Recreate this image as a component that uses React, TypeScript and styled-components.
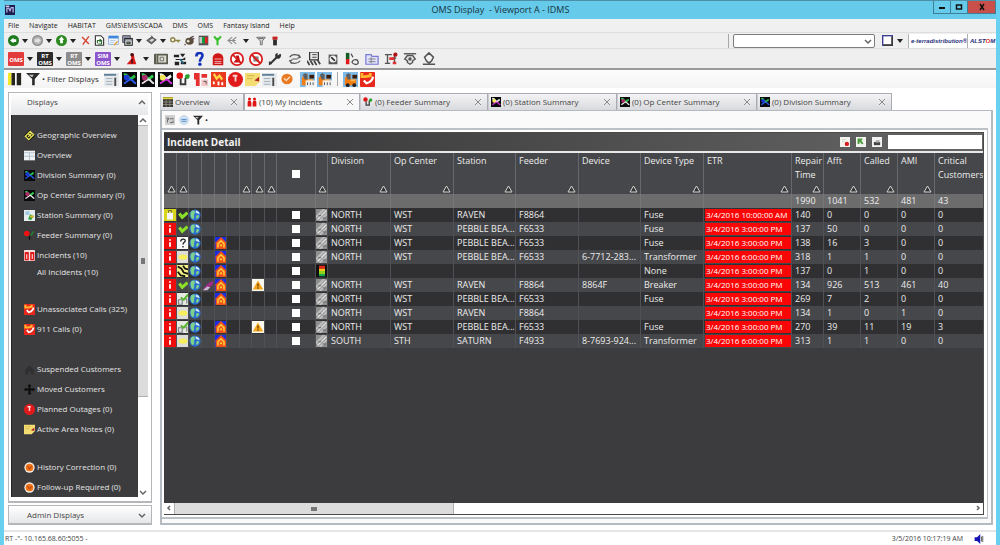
import React from "react";
import styled, { createGlobalStyle, css } from "styled-components";

const GlobalStyle = createGlobalStyle`
  * { box-sizing: border-box; }
  body {
    margin: 0;
    font-family: "Open Sans", "Noto Sans", sans-serif;
    font-size: 8px;
    line-height: 12px;
    color: #222;
  }
  button, input, select { font: inherit; color: inherit; margin: 0; padding: 0; border: 0; background: none; }
  svg { display: block; flex: none; }
`;

/* ---------- icons ---------- */

const OMS_BADGE = (fill: string, top: string) => (
  <>
    <rect x="0" y="1" width="16" height="14" rx="1" fill={fill} />
    {top && (
      <text x="8" y="7" fontSize="6" fontWeight="700" fill="#fff" textAnchor="middle">{top}</text>
    )}
    <text x="8" y={top ? 14 : 11} fontSize={6} fontWeight="700" fill="#fff" textAnchor="middle">OMS</text>
  </>
);

const TRUCK = (
  <>
    <rect width="16" height="16" fill="#7fb9e6" />
    <path d="M2 14V6l4-4h2v6h6v6z" fill="#f07c12" />
    <path d="M3 3l3-2 2 2v5H5z" fill="#56606a" />
    <path d="M10 3h5v4h-5z" fill="#3c1c08" />
    <path d="M8 8h5v2H8z" fill="#ffb347" />
  </>
);

const NETWORK = (a: string, b: string, c: string) => (
  <>
    <rect width="16" height="16" fill="#0a0a0c" />
    <path d="M2 3c4-1 4 3 6 4s4-2 6-3" stroke={a} strokeWidth="3" fill="none" />
    <path d="M2 12c3 0 4-4 7-4s3 4 6 4" stroke={b} strokeWidth="2" fill="none" />
    <circle cx="5" cy="6" r="3" fill={c} />
  </>
);

const ICONS: Record<string, React.ReactNode> = {
  app: (
    <>
      <rect width="16" height="16" fill="#1d1c4e" />
      <path d="M3 12V5h3l2 4 2-5h3v8" stroke="#b9b7e8" strokeWidth="2" fill="none" />
      <path d="M1 1h6v2H1z" fill="#e8e8f4" />
    </>
  ),
  back: (
    <>
      <circle cx="8" cy="8" r="8" fill="#1d7a1d" />
      <path d="M3 8l5-4v2h4v4H8v2z" fill="#fff" />
    </>
  ),
  forward: (
    <>
      <circle cx="8" cy="8" r="8" fill="#8d8d8d" />
      <circle cx="8" cy="8" r="6" fill="#b4b4b4" />
      <path d="M13 8L8 4v2H4v4h4v2z" fill="#e2e2e2" />
    </>
  ),
  up: (
    <>
      <circle cx="8" cy="8" r="8" fill="#2c8a20" />
      <path d="M8 2L4 7h2v5h4V7h2z" fill="#fff" />
    </>
  ),
  stop: <path d="M3 3l10 10M13 2L4 14" stroke="#d8412f" strokeWidth="2" fill="none" />,
  refresh: (
    <>
      <path d="M2 1h8l4 4v10H2z" fill="#fff" stroke="#333" strokeWidth="1.6" />
      <path d="M5 12V8h5M8 6l3 2-3 2M11 9v4H6" stroke="#2a6e2a" strokeWidth="1.6" fill="none" />
    </>
  ),
  calendar: (
    <>
      <rect x="1" y="2" width="14" height="12" fill="#eef4fc" stroke="#7ba2d8" />
      <rect x="1" y="1" width="14" height="4" fill="#3f86dd" />
      <path d="M3 8h8M3 11h6" stroke="#9db8da" />
      <path d="M9 15l5-6" stroke="#e2a53c" strokeWidth="2" />
    </>
  ),
  windows: (
    <>
      <rect x="1" y="1" width="11" height="10" fill="#8a90a8" stroke="#333" />
      <rect x="4" y="5" width="11" height="10" fill="#d8d8e4" stroke="#222" strokeWidth="1.4" />
      <path d="M4 7h11M7 10h5v3H7z" stroke="#333" fill="#5d7f52" />
    </>
  ),
  printer: (
    <>
      <path d="M1 8l7-5 7 4-7 6z" fill="#6d6d6d" stroke="#333" />
      <path d="M5 8l4-3 3 2-4 3z" fill="#ddd" />
      <path d="M7 1l3 2-2 2" stroke="#333" fill="none" />
    </>
  ),
  key: (
    <>
      <circle cx="4" cy="7" r="3" fill="none" stroke="#8d8340" strokeWidth="2" />
      <path d="M7 8h8M12 8v3" stroke="#8d8340" strokeWidth="2" />
    </>
  ),
  beetle: (
    <>
      <ellipse cx="8" cy="9" rx="6" ry="5" fill="#5b4d3c" />
      <circle cx="6" cy="9" r="2" fill="#e2dccf" />
      <path d="M9 4l5-2M12 6l3-1M2 13l-1 2" stroke="#433" strokeWidth="1.6" />
    </>
  ),
  levels: (
    <>
      <rect x="1" y="1" width="14" height="14" fill="#555" />
      <rect x="2" y="3" width="4" height="9" fill="#c8c8c8" />
      <rect x="6" y="3" width="4" height="9" fill="#0aa03a" />
      <rect x="10" y="3" width="4" height="9" fill="#e02020" />
    </>
  ),
  branch: <path d="M3 2l5 6 5-6M8 8v7M8 4v3" stroke="#35c02c" strokeWidth="3" fill="none" />,
  chevrons: <path d="M9 3L3 8l6 5M15 3L9 8l6 5M4 8h10" stroke="#8a8a8a" strokeWidth="1.6" fill="none" />,
  filterOutline: <path d="M1 2h14l-5 6v6H7V8zM4 4h8" fill="#d6d6d6" stroke="#666" strokeWidth="1.4" />,
  signal: (
    <>
      <rect x="4" y="1" width="8" height="5" fill="#c62222" />
      <rect x="5" y="6" width="6" height="9" fill="#2b2b2b" />
    </>
  ),
  frame: (
    <>
      <rect x="1" y="1" width="14" height="14" fill="#fff" stroke="#3f3f96" strokeWidth="2" />
      <path d="M15 2v13H2" stroke="#3b3b3b" strokeWidth="3" fill="none" />
    </>
  ),
  oms: OMS_BADGE("#e23b3b", ""),
  rt: OMS_BADGE("#2b2b2b", "RT"),
  stby: OMS_BADGE("#8c8c8c", "RT"),
  sim: OMS_BADGE("#8d55cc", "SIM"),
  alarm: (
    <>
      <path d="M2 14L7 8V2h3l1 6 2 6z" fill="#d81c1c" />
      <circle cx="8" cy="3" r="2" fill="#4b1111" />
      <path d="M8 8v5" stroke="#511" strokeWidth="2" />
    </>
  ),
  camera: (
    <>
      <rect x="0" y="2" width="16" height="12" rx="1" fill="#5b5b50" />
      <path d="M3 3v10" stroke="#a8a89c" />
      <rect x="5" y="4" width="9" height="8" fill="#dcdcd0" />
      <path d="M7 6h4v4H7z" fill="none" stroke="#666" />
    </>
  ),
  device: (
    <>
      <path d="M1 3h6v3H1zM8 2h6l-3 4M3 8h8l3-2v3H3zM2 11h5v4H2zM9 11h6v3H9z" fill="#222" />
      <path d="M8 8l4 5" stroke="#2d6a8c" strokeWidth="2" />
    </>
  ),
  help: (
    <>
      <path d="M5 5c0-5 7-5 7-1 0 3-3 3-3 7" stroke="#1533b8" strokeWidth="3" fill="none" />
      <circle cx="9" cy="14" r="2" fill="#1533b8" />
    </>
  ),
  bag: (
    <>
      <path d="M2 15V6c1-6 11-6 12 0v9z" fill="#cf1717" />
      <path d="M4 8h8M4 11h8M4 13h8" stroke="#f7c6c6" />
    </>
  ),
  noAlarm: (
    <>
      <circle cx="8" cy="8" r="7" fill="#fff" stroke="#d81c1c" strokeWidth="2" />
      <path d="M4 12l3-4V4h3l2 8z" fill="#c01212" />
      <path d="M3 3l10 10" stroke="#d81c1c" strokeWidth="2" />
    </>
  ),
  noEntry: (
    <>
      <circle cx="8" cy="8" r="7" fill="#fff" stroke="#d81c1c" strokeWidth="2" />
      <path d="M5 5h6v6H5z" fill="#888" />
      <path d="M3 3l10 10" stroke="#d81c1c" strokeWidth="2.4" />
    </>
  ),
  wrench: (
    <>
      <path d="M3 13l7-7" stroke="#333" strokeWidth="2.4" />
      <path d="M14 2l-3 2v-3c-3 0-4 4-1 6s5-1 5-4zM1 11c2-1 4 1 3 3l-3 1z" fill="#333" />
    </>
  ),
  swap: <path d="M2 6c2-4 9-4 12 0M14 10c-3 4-10 4-12 0M5 8h6M12 3l2 3-3 1M4 13l-2-3 3-1" stroke="#555" strokeWidth="1.4" fill="none" />,
  crew: (
    <>
      <rect x="3" y="0" width="10" height="9" fill="#e8e8e8" stroke="#333" strokeWidth="1.4" />
      <path d="M6 3h5M6 6h5" stroke="#333" />
      <path d="M0 10l3 5M4 10l3 5M8 10l3 5M12 9l3 5" stroke="#444" strokeWidth="2" />
    </>
  ),
  tag: (
    <>
      <rect x="3" y="3" width="10" height="11" fill="#555" />
      <circle cx="8" cy="8" r="4" fill="#eee" />
      <path d="M6 6l4 4" stroke="#222" strokeWidth="2" />
    </>
  ),
  semaphore: (
    <>
      <rect x="1" y="1" width="4" height="7" fill="#135c22" />
      <rect x="1" y="8" width="4" height="6" fill="#e01919" />
      <path d="M7 2l2 4M8 12c0-3 6-5 7-1s-5 4-7 1" stroke="#444" strokeWidth="1.4" fill="none" />
    </>
  ),
  folder: (
    <>
      <path d="M1 3h6l1 2h7v9H1z" fill="#dfe0fa" stroke="#7a7ad0" strokeWidth="1.4" />
      <path d="M4 8h8M4 11h8M7 6v7" stroke="#777" />
    </>
  ),
  circuit: (
    <>
      <path d="M1 3h8M1 13h6M4 3v10M9 7h5M12 3v9" stroke="#555" strokeWidth="1.6" />
      <path d="M6 6h6v3H6zM10 11h4v3h-4z" fill="#e23131" />
      <circle cx="13" cy="3" r="2.4" fill="#b01010" />
    </>
  ),
  bellDown: (
    <>
      <path d="M1 2h14" stroke="#555" strokeWidth="1.6" />
      <path d="M5 4h6l3 4-3 2v2l-3 2-3-2v-2L2 8z" stroke="#555" strokeWidth="1.6" fill="#e2e2e2" />
      <circle cx="8" cy="8" r="2" fill="#555" />
    </>
  ),
  bellUp: (
    <>
      <path d="M8 1L3 6l2 4 2 2h2l2-2 2-4z" stroke="#555" strokeWidth="1.8" fill="#f2f2f2" />
      <path d="M8 11v3M1 14h14" stroke="#555" strokeWidth="1.6" />
    </>
  ),
  columns: (
    <>
      <path d="M0 1h4v14H0z" fill="#f2e82a" />
      <path d="M4 1h4v14H4zM10 1h5v14h-5z" fill="#26261e" />
    </>
  ),
  filter: (
    <>
      <path d="M0 1h16L10 8v7H7V8z" fill="#2c2c2c" />
      <path d="M3 3h6L7 6z" fill="#c9c9c9" />
    </>
  ),
  sheet: (
    <>
      <rect x="0" y="1" width="16" height="14" fill="#e7ebee" />
      <path d="M0 3h13" stroke="#5e7f96" strokeWidth="2" />
      <path d="M2 7h7M2 10h7M2 13h7" stroke="#9fabb3" />
      <path d="M12 6v9" stroke="#4a4a4a" strokeWidth="2" />
    </>
  ),
  netBlue: NETWORK("#28c048", "#2a5bf0", "#1b38d0"),
  netGreen: NETWORK("#35d052", "#e8e8e8", "#ad2a68"),
  netMagenta: NETWORK("#f0f0f0", "#d22be0", "#f4e75a"),
  feeder: (
    <>
      <circle cx="4" cy="4" r="3.5" fill="#e01414" />
      <path d="M5 7v6h5V7l4-4" stroke="#3a3a3a" strokeWidth="2" fill="none" />
      <circle cx="12" cy="5" r="2.5" fill="#28a52f" />
    </>
  ),
  feederNav: (
    <>
      <circle cx="4" cy="5" r="4" fill="#f01010" />
      <path d="M10 8l4-6" stroke="#1d8a2a" strokeWidth="2" />
      <path d="M8 9v5" stroke="#0c0c0c" strokeWidth="2" />
    </>
  ),
  incidents: (
    <>
      <rect width="16" height="16" rx="1" fill="#f6dede" />
      <rect x="1" y="3" width="6" height="12" fill="#e01414" />
      <rect x="9" y="3" width="6" height="12" fill="#e01414" />
      <path d="M4 6v7M12 6v7" stroke="#fff" strokeWidth="1.4" />
    </>
  ),
  incidentsTab: (
    <>
      <path d="M2 6h4l1 3v6H1V8zM10 6h4l1 2v7H9V9z" fill="#e01414" />
      <circle cx="4" cy="3" r="2.4" fill="#e01414" />
      <circle cx="12" cy="3" r="2.4" fill="#e01414" />
    </>
  ),
  incidentsBar: (
    <>
      <path d="M0 1h6v7H0zM2 8h4v7H2zM8 2h6v4H8z" fill="#e63030" />
      <path d="M8 8h7v7H8z" fill="#f3c5c5" />
      <path d="M10 10h3v3" stroke="#555" fill="none" />
    </>
  ),
  callsBar: (
    <>
      <rect width="16" height="16" fill="#e83a20" />
      <path d="M3 2l3 5 3-3 3 4" stroke="#ffd84a" strokeWidth="2.4" fill="none" />
      <path d="M3 13v-3M8 14v-4M12 14v-3" stroke="#fff" strokeWidth="2" />
    </>
  ),
  calls: (
    <>
      <rect width="16" height="16" rx="1" fill="#e8281c" />
      <path d="M2 1v4h4l5-1V1" stroke="#ffb52e" strokeWidth="3" fill="none" />
      <path d="M4 9l3 3c4-1 6-3 7-7" stroke="#fff" strokeWidth="2.4" fill="none" />
    </>
  ),
  outage: (
    <>
      <circle cx="8" cy="8" r="8" fill="#e01a1a" />
      <path d="M5 4h5M8 4v6" stroke="#fbd0d0" strokeWidth="2" />
    </>
  ),
  note: (
    <>
      <path d="M0 1h16v9l-5 5H0z" fill="#f4dd72" />
      <path d="M2 4h8M2 7h6" stroke="#cfb34c" />
      <path d="M10 9l5-4v5z" fill="#b3242a" />
    </>
  ),
  orangeHeart: (
    <>
      <circle cx="8" cy="8" r="7.5" fill="#f5ede6" />
      <circle cx="8" cy="8" r="5.6" fill="#f0761c" />
      <path d="M5 6l3 4 3-4" stroke="#c54c10" strokeWidth="2" fill="none" />
    </>
  ),
  orangeBar: (
    <>
      <ellipse cx="8" cy="8" rx="7.5" ry="7" fill="#ea7a22" />
      <path d="M4 7l3 3 5-5" stroke="#fbd9b8" strokeWidth="2" fill="none" />
    </>
  ),
  truck: (
    <>
      {TRUCK}
      <circle cx="5" cy="14" r="2" fill="#222" />
      <circle cx="12" cy="14" r="2" fill="#222" />
    </>
  ),
  truckNote: (
    <>
      {TRUCK}
      <path d="M6 9h10v7H6z" fill="#f2f2f2" />
      <path d="M8 14v-3M11 14v-3M14 11v3" stroke="#555" />
    </>
  ),
  geo: (
    <>
      <path d="M8 0l8 8-8 8-8-8z" fill="#101008" />
      <path d="M9 2l5 5-7 7-5-5zM6 5l5 5M11 5l-5 5" stroke="#e8e25a" strokeWidth="2" fill="none" />
    </>
  ),
  overview: (
    <>
      <rect x="0" y="1" width="16" height="14" fill="#eef2f5" />
      <path d="M0 4h16M8 4v11M0 9h16" stroke="#a9b9c6" strokeWidth="1.2" />
    </>
  ),
  station: (
    <>
      <rect width="16" height="16" fill="#e4ecee" />
      <path d="M2 2h6v5H2z" fill="#9fc8e2" />
      <path d="M6 13l3-7 5 3-4 6z" fill="#2ea33a" />
      <path d="M9 8h5v3H9z" fill="#e8b428" />
    </>
  ),
  suspended: <path d="M2 15V8l6-6 6 6v7h-4v-4H6v4z" fill="#2f2f30" />,
  moved: <path d="M8 0l3 3H9.500v3.500H13V5l3 3-3 3V9.500H9.500V13H11l-3 3-3-3h1.500V9.500H3V11L0 8l3-3v1.500h3.500V3H5z" fill="#0c0c0c" />,
  grid: (
    <>
      <rect width="16" height="16" fill="#3a3a34" />
      <path d="M0 2h16" stroke="#e5d83a" strokeWidth="3" />
      <path d="M0 8h16M0 12h16M5 4v12M11 4v12" stroke="#a7a79c" />
    </>
  ),
  fit: (
    <>
      <rect width="16" height="16" fill="#cfcfcf" />
      <path d="M2 5h4v2H4v5M8 6h6M8 12h5V9" stroke="#6d6d6d" strokeWidth="1.6" fill="none" />
    </>
  ),
  sync: (
    <>
      <circle cx="8" cy="8" r="7" fill="#d5e4f4" stroke="#9fbfe0" />
      <path d="M4 7h8M4 10h8" stroke="#4a84c4" strokeWidth="1.6" />
    </>
  ),
  exportRed: (
    <>
      <rect width="16" height="16" fill="#f1f1ee" />
      <path d="M3 4h7M3 7h5" stroke="#bcd0bc" />
      <circle cx="11" cy="11" r="3.5" fill="#d81c1c" />
    </>
  ),
  exportGreen: (
    <>
      <rect width="16" height="16" fill="#f1f4ee" />
      <path d="M4 4l7 7M4 11V4h6" stroke="#4b9a3c" strokeWidth="3" fill="none" />
    </>
  ),
  print: (
    <>
      <rect width="16" height="16" fill="#f1f1f1" />
      <path d="M3 8h10v5H3z" fill="#444" />
      <path d="M6 5h6v4H6z" fill="#aaa" />
    </>
  ),
  lock: (
    <>
      <rect width="16" height="16" fill="#d9d41c" />
      <rect x="4" y="5" width="8" height="9" fill="#f4f4ff" />
      <path d="M6 5V2h4v3" stroke="#555" fill="none" />
    </>
  ),
  info: (
    <>
      <rect width="16" height="16" fill="#ee0c0c" />
      <path d="M8 7v6M8 3v2" stroke="#fff" strokeWidth="2.4" />
    </>
  ),
  check: <path d="M3 6l4 5 7-6" stroke="#8be02a" strokeWidth="4" fill="none" />,
  question: (
    <>
      <rect width="16" height="16" fill="#fafafa" />
      <path d="M5 6c0-4 6-4 6-1 0 2-3 2-3 5M8 12v2" stroke="#222" strokeWidth="1.8" fill="none" />
    </>
  ),
  oval: (
    <>
      <rect width="16" height="16" fill="#dcdcd8" />
      <ellipse cx="8" cy="8" rx="6" ry="3.5" fill="#f6ee5a" />
    </>
  ),
  tiger: (
    <>
      <rect width="16" height="16" fill="#f4f08c" />
      <path d="M1 2l5 3 3 5 7 2M1 9l4 5 6 1M8 1l3 4 5 1" stroke="#141408" strokeWidth="2.4" fill="none" />
    </>
  ),
  dispatch: (
    <>
      <rect width="16" height="16" fill="#e6e8e2" />
      <path d="M2 9h5v6H2zM9 8h4v6" stroke="#7c8288" strokeWidth="1.6" fill="none" />
      <path d="M5 6l4 3 6-7" stroke="#58b82a" strokeWidth="2.6" fill="none" />
    </>
  ),
  globe: (
    <>
      <circle cx="8" cy="8" r="7.5" fill="#2b6fd0" />
      <path d="M5 2c4-1 3 3 2 5s1 4-1 6-4-3-4-6 1-4 3-5zM11 8c4-1 2 4 0 5s-2-4 0-5z" fill="#7fd08a" />
      <path d="M9 2c3 0 5 3 5 5l-5-2z" fill="#d6ecf8" />
    </>
  ),
  plane: (
    <>
      <path d="M1 14L8 6l7-4-1 7-6 2z" fill="#a02c8a" />
      <path d="M1 15l6-5 4 1-4 4z" fill="#c9bcd0" />
    </>
  ),
  house: (
    <>
      <rect width="16" height="16" fill="#1c2ce0" />
      <path d="M8 0l8 8-1 1v7H1V9L0 8z" fill="#f0521a" />
      <path d="M4 14V9l4-4 4 4v5" stroke="#ffd23a" strokeWidth="2" fill="none" />
      <circle cx="8" cy="11" r="1.5" fill="#ffd23a" />
    </>
  ),
  warning: (
    <>
      <rect width="16" height="16" fill="#fbf8ee" />
      <path d="M8 2l7 12H1z" fill="#f2a81d" />
      <path d="M8 6v4M8 11v2" stroke="#7a3c00" strokeWidth="1.8" />
    </>
  ),
  hatch: (
    <>
      <rect width="16" height="16" fill="#8f8f8f" />
      <path d="M0 11L11 0M5 16L16 5" stroke="#bdbdbd" strokeWidth="3" />
      <path d="M2 14L14 2" stroke="#e4e4e4" strokeWidth="2" />
      <path d="M3 9h4M9 12h4" stroke="#666" strokeWidth="1.6" />
    </>
  ),
  heat: (
    <>
      <rect width="16" height="16" fill="#111" />
      <path d="M4 1h8v4H4z" fill="#e8281c" />
      <path d="M4 5h8v3H4z" fill="#f6c21c" />
      <path d="M4 8h8v4H4z" fill="#8ed21c" />
      <path d="M4 12h8v3H4z" fill="#1ca84a" />
    </>
  ),
  speaker: (
    <>
      <path d="M1 5h4l5-5v16l-5-5H1z" fill="#1414b4" />
      <path d="M12 4v8M14 3v10" stroke="#555" strokeWidth="1.4" />
    </>
  ),
};

const Icon = ({ name, size = 12 }: { name: string; size?: number }) => (
  <svg width={size} height={size} viewBox="0 0 16 16" aria-hidden="true">{ICONS[name]}</svg>
);

const Chevron = ({ dir = "down", color = "#666" }: { dir?: "up" | "down" | "left" | "right"; color?: string }) => {
  const d = { up: "M1 6l3-3 3 3", down: "M1 3l3 3 3-3", left: "M5 2L3 4l2 2", right: "M3 2l2 2-2 2" }[dir];
  return (
    <svg width="8" height="8" viewBox="0 0 8 8" aria-hidden="true">
      <path d={d} stroke={color} strokeWidth="1.5" fill="none" />
    </svg>
  );
};

const Cross = () => (
  <svg width="8" height="8" viewBox="0 0 8 8" aria-hidden="true">
    <path d="M1 1l6 6M7 1L1 7" stroke="#8a8a8a" strokeWidth="1" />
  </svg>
);

/* ---------- window frame ---------- */

const Window = styled.div`
  display: flex;
  flex-direction: column;
  min-height: 100vh;
  background: #fff;
  border: solid #68d0f0;
  border-width: 0 4px 1px;
`;

const TitleBar = styled.header`
  display: grid;
  grid-template-columns: 1fr auto 1fr;
  align-items: center;
  height: 19px;
  padding-left: 1px;
  background: #66caea;
  border-top: 1px solid #4d8fa8;
`;

const Title = styled.h1`
  margin: 0;
  font-size: 9px;
  font-weight: 400;
  line-height: 14px;
  white-space: pre;
  color: #16343f;
`;

const WindowButtons = styled.div`
  display: flex;
  align-self: start;
  justify-self: end;
`;

const WindowButton = styled.button<{ $close?: boolean }>`
  display: grid;
  place-items: center;
  width: ${(p) => (p.$close ? 29 : 18)}px;
  height: 13px;
  border: 1px solid #3e7f98;
  border-top: 0;
  margin-left: -1px;
  background: ${(p) => (p.$close ? "#c9504a" : "#66caea")};
`;

const MenuBar = styled.nav`
  display: flex;
  align-items: center;
  gap: 10px;
  height: 13px;
  padding-left: 4px;
  background: #f0f0f0;
  font-size: 7px;
`;

const MenuLink = styled.a`
  color: #222;
  text-decoration: none;
  white-space: nowrap;
`;

const Toolbar = styled.div<{ $height: number; $light?: boolean }>`
  display: flex;
  align-items: center;
  height: ${(p) => p.$height}px;
  padding-left: 2px;
  background: ${(p) => (p.$light ? "linear-gradient(#fdfdfd, #f4f4f4)" : "#efefef")};
  border-top: ${(p) => (p.$light ? "2px solid #9a9a9a" : "1px solid #dedede")};
`;

const ToolGroup = styled.div<{ $gap?: number }>`
  display: flex;
  align-items: center;
  margin-left: ${(p) => p.$gap ?? 0}px;
`;

const ToolButton = styled.button<{ $width: number }>`
  display: grid;
  place-items: center;
  width: ${(p) => p.$width}px;
  height: 16px;
`;

const CaretButton = styled.button`
  display: grid;
  place-items: center;
  width: 10px;
  height: 16px;
`;

const FilterLabel = styled.span`
  width: 54px;
  margin-right: 4px;
  white-space: nowrap;
  color: #333;
`;

const Divider = styled.span`
  width: 1px;
  height: 14px;
  margin: 0 4px;
  background: #a8a8a8;
`;

const AddressTools = styled.div`
  display: flex;
  align-items: center;
  margin-left: auto;
`;

const SelectBox = styled.div`
  display: grid;
  align-items: center;
  width: 142px;
  height: 14px;

  select, svg { grid-area: 1 / 1; }
  select {
    appearance: none;
    width: 100%;
    height: 100%;
    background: #fff;
    border: 1px solid #7d7d7d;
    border-radius: 2px;
  }
  svg { justify-self: end; margin-right: 3px; pointer-events: none; }
`;

const Brand = styled.div<{ $width: number }>`
  width: ${(p) => p.$width}px;
  height: 14px;
  padding-left: 2px;
  background: #fff;
  border-left: 1px solid #b0b0b0;
  font: italic 700 6px/14px "Liberation Sans", sans-serif;
  white-space: nowrap;
  color: #27307c;
  em { color: #e0241c; }
`;

const Caret = () => (
  <svg width="6" height="4" viewBox="0 0 6 4" aria-hidden="true"><path d="M0 0h6L3 4z" fill="#222" /></svg>
);

type Tool = string;
const Tools = ({ items, width, size }: { items: Tool[]; width: number; size: number }) => (
  <>
    {items.map((item, i) =>
      item === "caret" ? (
        <CaretButton key={i} aria-label="More"><Caret /></CaretButton>
      ) : (
        <ToolButton key={i} $width={width} aria-label={item}><Icon name={item} size={size} /></ToolButton>
      )
    )}
  </>
);

/* ---------- side panel ---------- */

const Workspace = styled.div`
  flex: 1;
  display: flex;
  gap: 8px;
  padding: 4px 3px 5px 4px;
`;

const SidePanel = styled.aside`
  display: flex;
  flex-direction: column;
  gap: 2px;
  width: 144px;
  flex: none;
`;

const Section = styled.section`
  flex: 1;
  display: flex;
  flex-direction: column;
  padding: 0 3px 4px 2px;
  background: #fff;
  border: 1px solid #b4b6ba;
  border-bottom-width: 2px;
`;

const SectionHeader = styled.button<{ $boxed?: boolean }>`
  display: flex;
  align-items: center;
  justify-content: space-between;
  height: ${(p) => (p.$boxed ? 20 : 22)}px;
  padding: 0 ${(p) => (p.$boxed ? 5 : 2)}px ${(p) => (p.$boxed ? 0 : 4)}px ${(p) => (p.$boxed ? 18 : 16)}px;
  background: linear-gradient(#fff, #e6e7e9);
  color: #444;
  ${(p) => p.$boxed && css`
    border: 1px solid #b4b6ba;
    border-bottom-width: 2px;
  `}
`;

const SectionBody = styled.div`
  flex: 1;
  display: flex;
  min-height: 0;
`;

const NavList = styled.nav`
  flex: 1;
  padding: 10px 0 0 12px;
  background: #3c3c3e;
  border-left: 1px solid #222;
`;

const NavGroup = styled.div<{ $gap: number }>`
  margin-bottom: ${(p) => p.$gap}px;
`;

const NavLink = styled.a<{ $child?: boolean }>`
  display: flex;
  align-items: center;
  gap: 2px;
  height: ${(p) => (p.$child ? 14 : 20)}px;
  padding-left: ${(p) => (p.$child ? 13 : 0)}px;
  color: #e4e4e4;
  text-decoration: none;
  white-space: nowrap;
`;

const ScrollBar = styled.div<{ $horizontal?: boolean }>`
  display: flex;
  flex-direction: ${(p) => (p.$horizontal ? "row" : "column")};
  ${(p) => (p.$horizontal ? "height: 11px;" : "width: 10px;")}
  background: #fff;
`;

const ScrollArrow = styled.button`
  display: grid;
  place-items: center;
  width: 10px;
  height: 10px;
  flex: none;
`;

const ScrollTrack = styled.div<{ $horizontal?: boolean }>`
  flex: 1;
  display: flex;
  flex-direction: ${(p) => (p.$horizontal ? "row" : "column")};
`;

const ScrollThumb = styled.div<{ $horizontal?: boolean; $share: number }>`
  display: grid;
  place-items: center;
  flex: 0 0 ${(p) => p.$share}%;
  background: #dcdcdd;
  border: solid #b0b0b2;
  border-width: ${(p) => (p.$horizontal ? "0 1px" : "1px 0")};

  &::after {
    content: "";
    width: ${(p) => (p.$horizontal ? 6 : 4)}px;
    height: ${(p) => (p.$horizontal ? 4 : 6)}px;
    background: #77777a;
  }
`;

/* ---------- main panel ---------- */

const Main = styled.main`
  flex: 1;
  display: flex;
  flex-direction: column;
  min-width: 0;
  padding-top: 1px;
`;

const Tabs = styled.div`
  display: flex;
`;

const Tab = styled.div<{ $width: number; $active?: boolean }>`
  display: flex;
  align-items: center;
  gap: 4px;
  width: ${(p) => p.$width}px;
  height: 17px;
  padding: 0 5px 0 2px;
  background: ${(p) => (p.$active ? "#f8f8f8" : "linear-gradient(#f4f4f5, #d9dadd)")};
  border: 1px solid #a9adb3;
  border-left-color: ${(p) => (p.$active ? "#a9adb3" : "#c9ccd0")};
  border-bottom: 0;
`;

const TabButton = styled.button`
  flex: 1;
  display: flex;
  align-items: center;
  gap: 2px;
  white-space: nowrap;
  color: #444;
`;

const TabClose = styled.button`
  width: 8px;
  height: 8px;
`;

const Page = styled.div`
  flex: 1;
  display: flex;
  flex-direction: column;
  padding: 0 3px 4px 0;
  background: #fafafa;
  border: 1px solid #b5bac0;
  border-width: 1px 2px 2px;
`;

const PageTools = styled.div`
  display: flex;
  align-items: center;
  height: 17px;
  padding-left: 1px;
`;

const Frame = styled.div`
  flex: 1;
  display: flex;
  flex-direction: column;
  padding: 2px 3px 2px 2px;
  background: #fff;
  border: solid #bcc1c7;
  border-width: 2px 1px 2px 0;
`;

const Detail = styled.section`
  flex: 1;
  display: flex;
  flex-direction: column;
  background: #3c3c3e;
  border: 1px solid #4a4a4c;
  border-width: 1px 1px 1px 0;
`;

const DetailHeader = styled.div`
  display: flex;
  align-items: center;
  gap: 5px;
  height: 18px;
  padding: 1px 1px 1px 3px;
  background: linear-gradient(90deg, #333335, #666);

  h2 {
    flex: 1;
    margin: 0;
    font-size: 10px;
    font-weight: 700;
    line-height: 14px;
    color: #f2f2f2;
  }
  button { margin-right: 1px; }
`;

const SearchInput = styled.input`
  width: 94px;
  height: 14px;
  background: #fff;
`;

const TableArea = styled.div`
  flex: 1;
  border-top: 2px solid #e8e8e8;
  overflow: hidden;
`;

const Table = styled.table`
  width: 100%;
  table-layout: fixed;
  border-collapse: separate;
  border-spacing: 0;
  font-size: 9px;
  color: #ececec;
`;

const Th = styled.th`
  height: 41px;
  padding: 1px 0 0 3px;
  background: #46474a;
  border-right: 1px solid #66686b;
  font-weight: 400;
  text-align: left;
  vertical-align: top;
  overflow: hidden;
  &:last-child { border-right: 0; }
`;

const HeadCell = styled.div`
  display: flex;
  flex-direction: column;
  justify-content: space-between;
  height: 39px;
  line-height: 14px;
`;

const SortMark = styled.span<{ $tight?: boolean }>`
  align-self: flex-end;
  margin-right: ${(p) => (p.$tight ? 0 : 2)}px;
`;

const Td = styled.td<{ $tone: "sum" | "odd" | "even"; $icon?: boolean }>`
  height: 14px;
  padding: 0 0 0 ${(p) => (p.$icon ? 0 : 3)}px;
  background: ${(p) => ({ sum: "#6c6c6d", odd: "#303032", even: "#46474a" }[p.$tone])};
  border-right: 1px solid ${(p) => (p.$tone === "sum" ? "#77777a" : "#505154")};
  line-height: 14px;
  white-space: nowrap;
  overflow: hidden;
  text-overflow: ellipsis;
  svg { margin: 0 auto; }
  &:last-child { border-right: 0; }
`;

const Etr = styled.div`
  height: 12px;
  margin-left: -2px;
  padding-left: 1px;
  background: #fa0505;
  font-size: 8px;
  line-height: 12px;
  color: #fff;
`;

const Tick = styled.input`
  appearance: none;
  display: block;
  width: 8px;
  height: 8px;
  margin: 0 auto;
  background: #fff;
`;

const HeadTick = styled.div`
  display: grid;
  place-items: center;
  height: 39px;
  padding-right: 3px;
`;

const StatusBar = styled.footer`
  display: flex;
  align-items: center;
  justify-content: space-between;
  height: 16px;
  padding: 0 12px 0 1px;
  border-top: 2px solid #e6e6e6;
  font-size: 7px;
  color: #444;
`;

const StatusRight = styled.div`
  display: flex;
  align-items: center;
  gap: 11px;
`;

/* ---------- data ---------- */

const MENUS = ["File", "Navigate", "HABITAT", "GMS\\EMS\\SCADA", "DMS", "OMS", "Fantasy Island", "Help"];

const NAV: { gap: number; items: [string, string][] }[] = [
  {
    gap: 20,
    items: [
      ["geo", "Geographic Overview"],
      ["overview", "Overview"],
      ["netBlue", "Division Summary (0)"],
      ["netGreen", "Op Center Summary (0)"],
      ["station", "Station Summary (0)"],
      ["feederNav", "Feeder Summary (0)"],
      ["incidents", "Incidents (10)"],
      ["", "All Incidents (10)"],
    ],
  },
  { gap: 20, items: [["calls", "Unassociated Calls (325)"], ["calls", "911 Calls (0)"]] },
  {
    gap: 18,
    items: [
      ["suspended", "Suspended Customers"],
      ["moved", "Moved Customers"],
      ["outage", "Planned Outages (0)"],
      ["note", "Active Area Notes (0)"],
    ],
  },
  { gap: 0, items: [["orangeHeart", "History Correction (0)"], ["orangeHeart", "Follow-up Required (0)"]] },
];

const TABS: [string, string, number][] = [
  ["grid", "Overview", 84],
  ["incidentsTab", "(10) My Incidents", 116],
  ["feeder", "(0) Feeder Summary", 128],
  ["netMagenta", "(0) Station Summary", 129],
  ["netGreen", "(0) Op Center Summary", 140],
  ["netBlue", "(0) Division Summary", 135],
];

const COLUMNS: { label?: string; width?: number; sort?: boolean }[] = [
  { width: 13, sort: true }, { width: 12, sort: true }, { width: 13 }, { width: 13 }, { width: 12 }, { width: 13 },
  { width: 12, sort: true }, { width: 13, sort: true }, { width: 12, sort: true }, { width: 39 }, { width: 12, sort: true },
  { label: "Division", width: 63, sort: true },
  { label: "Op Center", width: 63, sort: true },
  { label: "Station", width: 62, sort: true },
  { label: "Feeder", width: 63, sort: true },
  { label: "Device", width: 62, sort: true },
  { label: "Device Type", width: 63, sort: true },
  { label: "ETR", width: 88, sort: true },
  { label: "Repair Time", width: 32, sort: true },
  { label: "Afft", width: 37, sort: true },
  { label: "Called", width: 37, sort: true },
  { label: "AMI", width: 37, sort: true },
  { label: "Critical Customers" },
];

const TICK_COLUMN = 9;
const ETR_COLUMN = 17;
const FIRST_TEXT_COLUMN = 11;

const row = (icons: string, text: string) => [...icons.split(","), ...text.split("|")];

const ROWS = [
  row("lock,check,globe,,,,,,,,hatch", "NORTH|WST|RAVEN|F8864||Fuse|3/4/2016 10:00:00 AM|140|0|0|0|0"),
  row("info,check,globe,,,,,,,,hatch", "NORTH|WST|PEBBLE BEA...|F6533||Fuse|3/4/2016 3:00:00 PM|137|50|0|0|0"),
  row("info,question,globe,,house,,,,,,hatch", "NORTH|WST|PEBBLE BEA...|F6533||Fuse|3/4/2016 3:00:00 PM|138|16|3|0|0"),
  row("info,oval,globe,,house,,,,,,hatch", "NORTH|WST|PEBBLE BEA...|F6533|6-7712-283...|Transformer|3/4/2016 6:00:00 PM|318|1|1|0|0"),
  row("info,tiger,globe,,house,,,,,,heat", "|||||None|3/4/2016 3:00:00 PM|137|0|1|0|0"),
  row("info,check,globe,plane,house,,,warning,,,hatch", "NORTH|WST|RAVEN|F8864|8864F|Breaker|3/4/2016 3:00:00 PM|134|926|513|461|40"),
  row("info,dispatch,globe,,house,,,,,,hatch", "NORTH|WST|PEBBLE BEA...|F6533||Fuse|3/4/2016 3:00:00 PM|269|7|2|0|0"),
  row("info,oval,globe,,,,,,,,hatch", "NORTH|WST|RAVEN|F8864|||3/4/2016 3:00:00 PM|134|1|0|1|0"),
  row("info,dispatch,globe,,house,,,warning,,,hatch", "NORTH|WST|PEBBLE BEA...|F6533||Fuse|3/4/2016 3:00:00 PM|270|39|11|19|3"),
  row("info,oval,globe,,house,,,,,,hatch", "SOUTH|STH|SATURN|F4933|8-7693-924...|Transformer|3/4/2016 6:00:00 PM|313|1|1|0|0"),
];

const TOTALS = ["1990", "1041", "532", "481", "43"];

/* ---------- parts ---------- */

const SortTriangle = ({ tight }: { tight?: boolean }) => (
  <SortMark $tight={tight}>
    <svg width="9" height="8" viewBox="0 0 9 8" aria-hidden="true">
      <path d="M1 7l3.500-6L8 7z" fill="#333" stroke="#d4d4d4" strokeWidth="1" />
    </svg>
  </SortMark>
);

const Cell = ({ value, index, rowIndex }: { value: string; index: number; rowIndex: number }) => {
  if (index === TICK_COLUMN) return <Tick type="checkbox" aria-label={`Select row ${rowIndex + 1}`} />;
  if (index === ETR_COLUMN) return <Etr>{value}</Etr>;
  if (index < FIRST_TEXT_COLUMN) return value ? <Icon name={value} size={12} /> : null;
  return <>{value}</>;
};

const IncidentTable = () => (
  <Table>
    <colgroup>
      {COLUMNS.map((c, i) => <col key={i} width={c.width} />)}
    </colgroup>
    <thead>
      <tr>
        {COLUMNS.map((c, i) => (
          <Th key={i}>
            {i === TICK_COLUMN ? (
              <HeadTick><Tick type="checkbox" aria-label="Select all rows" /></HeadTick>
            ) : (
              <HeadCell>
                <span>{c.label}</span>
                {c.sort && <SortTriangle tight={!c.label} />}
              </HeadCell>
            )}
          </Th>
        ))}
      </tr>
    </thead>
    <tbody>
      <tr>
        {COLUMNS.map((_, i) => (
          <Td key={i} $tone="sum">{TOTALS[i - ETR_COLUMN - 1]}</Td>
        ))}
      </tr>
      {ROWS.map((cells, r) => (
        <tr key={r}>
          {cells.map((value, i) => (
            <Td key={i} $tone={r % 2 ? "even" : "odd"} $icon={i < FIRST_TEXT_COLUMN}>
              <Cell value={value} index={i} rowIndex={r} />
            </Td>
          ))}
        </tr>
      ))}
    </tbody>
  </Table>
);

export default function App() {
  return (
    <Window>
      <GlobalStyle />
      <TitleBar>
        <Icon name="app" size={10} />
        <Title>{"OMS Display  - Viewport A - IDMS"}</Title>
        <WindowButtons>
          <WindowButton aria-label="Minimize">
            <svg width="8" height="8" viewBox="0 0 8 8"><path d="M1 5h6" stroke="#111" strokeWidth="2" /></svg>
          </WindowButton>
          <WindowButton aria-label="Maximize">
            <svg width="8" height="8" viewBox="0 0 8 8"><rect x="1.5" y="2" width="5" height="4" fill="none" stroke="#111" strokeWidth="1.5" /></svg>
          </WindowButton>
          <WindowButton $close aria-label="Close">
            <svg width="8" height="8" viewBox="0 0 8 8"><path d="M2 1l4 6M6 1L2 7" stroke="#111" strokeWidth="1.5" /></svg>
          </WindowButton>
        </WindowButtons>
      </TitleBar>

      <MenuBar>
        {MENUS.map((m) => <MenuLink key={m} href="#">{m}</MenuLink>)}
      </MenuBar>

      <Toolbar $height={16}>
        <Tools
          width={14}
          size={11}
          items={["back", "caret", "forward", "caret", "up", "caret", "stop", "refresh", "calendar", "windows", "caret", "printer", "caret", "key", "beetle", "levels", "branch", "chevrons"]}
        />
        <ToolGroup $gap={3}><Tools width={14} size={10} items={["caret"]} /></ToolGroup>
        <ToolGroup $gap={3}><Tools width={14} size={10} items={["filterOutline", "signal"]} /></ToolGroup>
        <AddressTools>
          <Divider />
          <SelectBox>
            <select aria-label="Display address"><option></option></select>
            <Chevron />
          </SelectBox>
          <ToolGroup $gap={4}><Tools width={16} size={11} items={["frame", "caret"]} /></ToolGroup>
          <ToolGroup $gap={3}>
            <Brand $width={59}>e-terradistribution®</Brand>
            <Brand $width={29}>ALST<em>O</em>M</Brand>
          </ToolGroup>
        </AddressTools>
      </Toolbar>

      <Toolbar $height={20}>
        <Tools width={19} size={16} items={["oms", "caret", "rt", "caret", "stby", "caret", "sim", "caret"]} />
        <Tools width={19} size={14} items={["alarm", "caret", "camera", "device", "help", "bag", "noAlarm", "noEntry", "wrench"]} />
        <ToolGroup $gap={1}><Tools width={19} size={14} items={["swap", "crew", "tag", "semaphore"]} /></ToolGroup>
        <ToolGroup $gap={1}><Tools width={19} size={14} items={["folder", "circuit", "bellDown", "bellUp"]} /></ToolGroup>
      </Toolbar>

      <Toolbar $height={20} $light>
        <Tools width={18} size={14} items={["columns", "filter"]} />
        <FilterLabel>• Filter Displays</FilterLabel>
        <ToolGroup $gap={2}><Tools width={18} size={15} items={["sheet", "netBlue", "netGreen", "netMagenta", "feeder", "incidentsBar"]} /></ToolGroup>
        <Tools width={17} size={15} items={["callsBar", "outage", "note", "sheet"]} />
        <Tools width={17} size={12} items={["orangeBar"]} />
        <ToolGroup $gap={4}><Tools width={17} size={15} items={["truckNote", "truckNote"]} /></ToolGroup>
        <Divider />
        <Tools width={17} size={15} items={["truck", "calls"]} />
      </Toolbar>

      <Workspace>
        <SidePanel>
          <Section>
            <SectionHeader>Displays<Chevron dir="up" /></SectionHeader>
            <SectionBody>
              <NavList aria-label="Displays">
                {NAV.map((group, g) => (
                  <NavGroup key={g} $gap={group.gap}>
                    {group.items.map(([icon, label]) => (
                      <NavLink key={label} href="#" $child={!icon}>
                        {icon && <Icon name={icon} size={11} />}
                        {label}
                      </NavLink>
                    ))}
                  </NavGroup>
                ))}
              </NavList>
              <ScrollBar>
                <ScrollArrow aria-label="Scroll up"><Chevron dir="up" /></ScrollArrow>
                <ScrollTrack><ScrollThumb $share={75} /></ScrollTrack>
                <ScrollArrow aria-label="Scroll down"><Chevron /></ScrollArrow>
              </ScrollBar>
            </SectionBody>
          </Section>
          <SectionHeader $boxed>Admin Displays<Chevron /></SectionHeader>
        </SidePanel>

        <Main>
          <Tabs role="tablist">
            {TABS.map(([icon, label, width], i) => (
              <Tab key={label} $width={width} $active={i === 1}>
                <TabButton role="tab" aria-selected={i === 1}><Icon name={icon} size={10} />{label}</TabButton>
                <TabClose aria-label={`Close ${label}`}><Cross /></TabClose>
              </Tab>
            ))}
          </Tabs>
          <Page>
            <PageTools>
              <Tools width={14} size={10} items={["fit", "sync", "filter"]} />
              <span>•</span>
            </PageTools>
            <Frame>
              <Detail>
                <DetailHeader>
                  <h2>Incident Detail</h2>
                  <Tools width={10} size={10} items={["exportRed", "exportGreen", "print"]} />
                  <SearchInput type="text" aria-label="Search incidents" />
                </DetailHeader>
                <TableArea><IncidentTable /></TableArea>
                <ScrollBar $horizontal>
                  <ScrollArrow aria-label="Scroll left"><Chevron dir="left" /></ScrollArrow>
                  <ScrollTrack $horizontal><ScrollThumb $horizontal $share={35} /></ScrollTrack>
                  <ScrollArrow aria-label="Scroll right"><Chevron dir="right" /></ScrollArrow>
                </ScrollBar>
              </Detail>
            </Frame>
          </Page>
        </Main>
      </Workspace>

      <StatusBar>
        <span>RT -"- 10.165.68.60:5055 -</span>
        <StatusRight>
          <span>3/5/2016 10:17:19 AM</span>
          <Icon name="speaker" size={10} />
        </StatusRight>
      </StatusBar>
    </Window>
  );
}
